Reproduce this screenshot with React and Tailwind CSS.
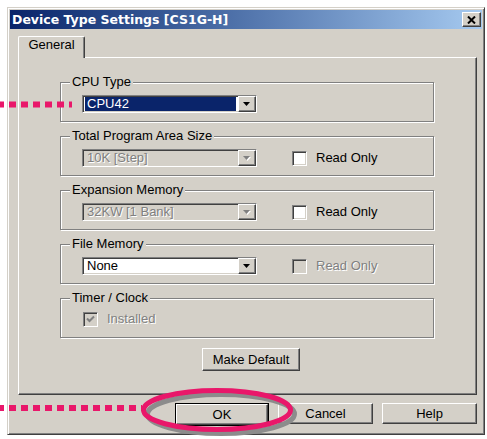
import React from "react";

/* ─── WIN CLASSIC BEVELS ─────────────────────────────────────── */
const raised  = "border border-t-white border-l-white border-r-[#404040] border-b-[#404040] shadow-[inset_-1px_-1px_0_#808080]";
const sunken  = "border border-t-[#808080] border-l-[#808080] border-r-white border-b-white shadow-[inset_1px_1px_0_#404040,inset_-1px_-1px_0_#d4d0c8]";
const dimText = "text-[#808080] [text-shadow:1px_1px_0_#fff]";

const Arrow = ({ disabled }) => (
  <svg width="8" height="5" viewBox="0 0 8 5">
    {disabled && <path d="M1 1h7L4.5 5z" fill="#fff" />}
    <path d="M0 0h7L3.5 4z" fill={disabled ? "#808080" : "#000"} />
  </svg>
);

const Combo = ({ value, disabled, selected }) => (
  <div className={`w-[175px] h-[18px] flex ${sunken} ${disabled ? "bg-[#d4d0c8]" : "bg-white"}`}>
    <div className="flex-1 flex items-center pl-[2px] pr-[2px]">
      {selected ? (
        <span className="w-full h-[14px] bg-[#0a246a] text-white leading-[14px] pl-[2px]">{value}</span>
      ) : (
        <span className={`leading-[14px] pl-[2px] ${disabled ? dimText : "text-black"}`}>{value}</span>
      )}
    </div>
    <div className={`w-[18px] h-[16px] flex items-center justify-center bg-[#d4d0c8] ${raised}`}>
      <Arrow disabled={disabled} />
    </div>
  </div>
);

const Check = ({ label, disabled, checked }) => (
  <div className="flex items-center">
    <div className={`w-[15px] h-[15px] flex items-center justify-center ${sunken} ${disabled ? "bg-[#d4d0c8]" : "bg-white"}`}>
      {checked && (
        <svg width="9" height="8" viewBox="0 0 9 8">
          <path d="M1 3.5l2.5 2.5L8 1.5" stroke={disabled ? "#808080" : "#000"} strokeWidth="2" fill="none" />
        </svg>
      )}
    </div>
    <span className={`ml-[9px] leading-[16px] ${disabled ? dimText : "text-black"}`}>{label}</span>
  </div>
);

const Group = ({ label, children }) => (
  <div className="relative h-[40px] w-[374px] border border-[#808080] shadow-[1px_1px_0_#fff,inset_1px_1px_0_#fff] pl-[21px] pt-[12px]">
    <span className="absolute left-[9px] top-[-9px] px-[2px] bg-[#d4d0c8] leading-[16px] text-black">{label}</span>
    <div className="flex items-center">{children}</div>
  </div>
);

const Btn = ({ children, className = "" }) => (
  <div className={`h-[21px] flex items-center justify-center bg-[#d4d0c8] text-black ${raised} ${className}`}>
    {children}
  </div>
);

/* ─── MAIN ───────────────────────────────────────────────────── */
export default function App() {
  return (
    <div className="relative w-[487px] h-[439px] bg-white pt-[7px] pl-[7px] overflow-hidden text-[13px] font-['Liberation_Sans',Arial,sans-serif]">
      <div className="w-[478px] h-[428px] bg-[#d4d0c8] p-[2px] border border-t-[#d4d0c8] border-l-[#d4d0c8] border-r-[#404040] border-b-[#404040] shadow-[inset_1px_1px_0_#fff,inset_-1px_-1px_0_#808080]">
        {/* title bar */}
        <div className="h-[19px] flex items-center justify-between bg-gradient-to-r from-[#0a246a] to-[#a6caf0] pl-[2px] pr-[1px]">
          <span className="text-white font-bold text-[12.5px] leading-[19px] font-['DejaVu_Sans',Verdana,sans-serif]">
            Device Type Settings [CS1G-H]
          </span>
          <div className={`w-[19px] h-[15px] flex items-center justify-center bg-[#d4d0c8] ${raised}`}>
            <svg width="9" height="8" viewBox="0 0 9 8">
              <path d="M1 0.5l7 7M8 0.5l-7 7" stroke="#000" strokeWidth="2" />
            </svg>
          </div>
        </div>

        <div className="ml-[8px] mr-[5px] mt-[7px]">
          {/* tab */}
          <div className="relative z-10 -mb-[1px] w-[67px] h-[22px] bg-[#d4d0c8] rounded-t-[2px] border-t border-l border-r border-t-white border-l-white border-r-[#404040] shadow-[inset_-1px_0_0_#808080] flex justify-center text-black leading-[16px]">
            General
          </div>

          {/* panel */}
          <div className={`h-[338px] pt-[24px] pl-[41px] ${raised}`}>
            <div className="flex flex-col gap-[14px]">
              <Group label="CPU Type">
                <Combo value="CPU42" selected />
              </Group>
              <Group label="Total Program Area Size">
                <Combo value="10K [Step]" disabled />
                <div className="ml-[35px]"><Check label="Read Only" /></div>
              </Group>
              <Group label="Expansion Memory">
                <Combo value="32KW [1 Bank]" disabled />
                <div className="ml-[35px]"><Check label="Read Only" /></div>
              </Group>
              <Group label="File Memory">
                <Combo value="None" />
                <div className="ml-[35px]"><Check label="Read Only" disabled /></div>
              </Group>
              <Group label="Timer / Clock">
                <div className="ml-[1px]"><Check label="Installed" disabled checked /></div>
              </Group>
            </div>
            <Btn className="mt-[10px] ml-[142px] w-[98px] h-[23px]">Make Default</Btn>
          </div>

          {/* dialog buttons */}
          <div className="mt-[8px] flex justify-end gap-[9px]">
            <div className="border border-black">
              <Btn className="w-[92px] h-[19px]">OK</Btn>
            </div>
            <Btn className="w-[95px]">Cancel</Btn>
            <Btn className="w-[95px]">Help</Btn>
          </div>
        </div>
      </div>

      {/* annotation overlay */}
      <svg className="absolute inset-0 pointer-events-none" width="487" height="439" viewBox="0 0 487 439">
        <line x1="-3" y1="104.5" x2="72" y2="104.5" stroke="#e9176a" strokeWidth="6" strokeDasharray="7 5" />
        <line x1="-3" y1="408" x2="142" y2="408" stroke="#e9176a" strokeWidth="6" strokeDasharray="7 5" />
        <ellipse cx="221" cy="414" rx="73.5" ry="19.5" fill="none" stroke="#8c8c8c" strokeWidth="5" />
        <ellipse cx="217" cy="410" rx="73.5" ry="19.5" fill="none" stroke="#e9176a" strokeWidth="5" />
      </svg>
    </div>
  );
}
